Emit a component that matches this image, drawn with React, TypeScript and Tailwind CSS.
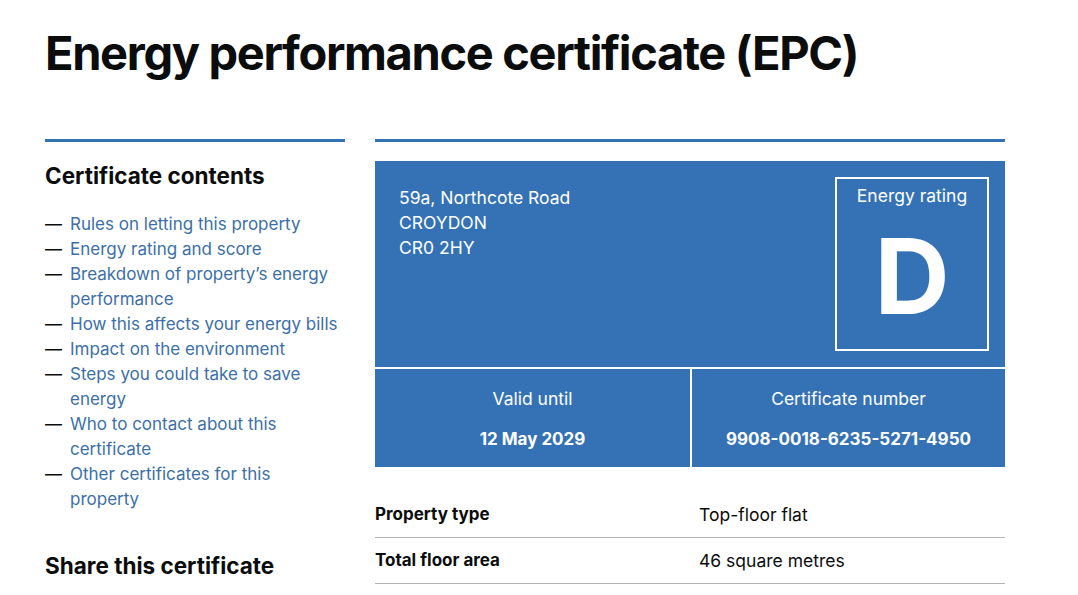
import React from 'react'

const contents = [
  'Rules on letting this property',
  'Energy rating and score',
  'Breakdown of property’s energy performance',
  'How this affects your energy bills',
  'Impact on the environment',
  'Steps you could take to save energy',
  'Who to contact about this certificate',
  'Other certificates for this property',
]

const summary = [
  { label: 'Property type', value: 'Top-floor flat' },
  { label: 'Total floor area', value: '46 square metres' },
]

export default function App() {
  return (
    <div
      className="min-h-screen bg-white text-[#0b0c0c] px-[45px] pt-[28px]"
      style={{ fontFamily: 'Inter, "Noto Sans", Arial, sans-serif' }}
    >
      <h1 className="text-[47px] leading-[50px] font-bold tracking-[-1.35px] mb-[61px]">
        Energy performance certificate (EPC)
      </h1>

      <div className="flex gap-[30px]">
        {/* Sidebar */}
        <aside className="w-[300px] shrink-0 border-t-[3px] border-[#3572b5]">
          <h2 className="text-[22.5px] leading-[30px] font-bold mt-[19px]">Certificate contents</h2>
          <ul className="mt-[21px] pr-[3px] text-[17px] leading-[25px]">
            {contents.map((item) => (
              <li key={item} className="flex">
                <span className="w-[25px] shrink-0 text-[#0b0c0c]">—</span>
                <a href="#" className="text-[#3c6fa8]">
                  {item}
                </a>
              </li>
            ))}
          </ul>
          <h2 className="text-[22.5px] leading-[30px] font-bold mt-[39px]">Share this certificate</h2>
        </aside>

        {/* Main */}
        <main className="w-[630px] shrink-0 border-t-[3px] border-[#3572b5]">
          <div className="mt-[19px] bg-[#3572b5] text-white">
            <div className="flex justify-between h-[206px] pl-[24px] pr-[16px] pt-[16px]">
              <div className="pt-[8px] text-[17.5px] leading-[25px]">
                <p>59a, Northcote Road</p>
                <p>CROYDON</p>
                <p>CR0 2HY</p>
              </div>
              <div className="w-[154px] h-[174px] border-2 border-white flex flex-col items-center">
                <p className="text-[17.5px] leading-[25px] mt-[4px]">Energy rating</p>
                <p className="text-[104px] leading-[100px] font-bold mt-[18px]">D</p>
              </div>
            </div>
            <div className="flex border-t-2 border-white h-[100px]">
              <div className="w-[315px] flex flex-col items-center pt-[17px]">
                <p className="text-[17.5px] leading-[25px]">Valid until</p>
                <p className="text-[17px] leading-[25px] font-bold mt-[16px]">12 May 2029</p>
              </div>
              <div className="flex-1 border-l-2 border-white flex flex-col items-center pt-[17px]">
                <p className="text-[17.5px] leading-[25px]">Certificate number</p>
                <p className="text-[17px] leading-[25px] font-bold mt-[16px]">9908-0018-6235-5271-4950</p>
              </div>
            </div>
          </div>

          <dl className="mt-[25px] text-[17.5px] leading-[25px]">
            {summary.map((row) => (
              <div key={row.label} className="flex border-b border-[#b1b4b6] py-[10px]">
                <dt className="w-[324px] font-bold text-[17px]">{row.label}</dt>
                <dd>{row.value}</dd>
              </div>
            ))}
          </dl>
        </main>
      </div>
    </div>
  )
}
